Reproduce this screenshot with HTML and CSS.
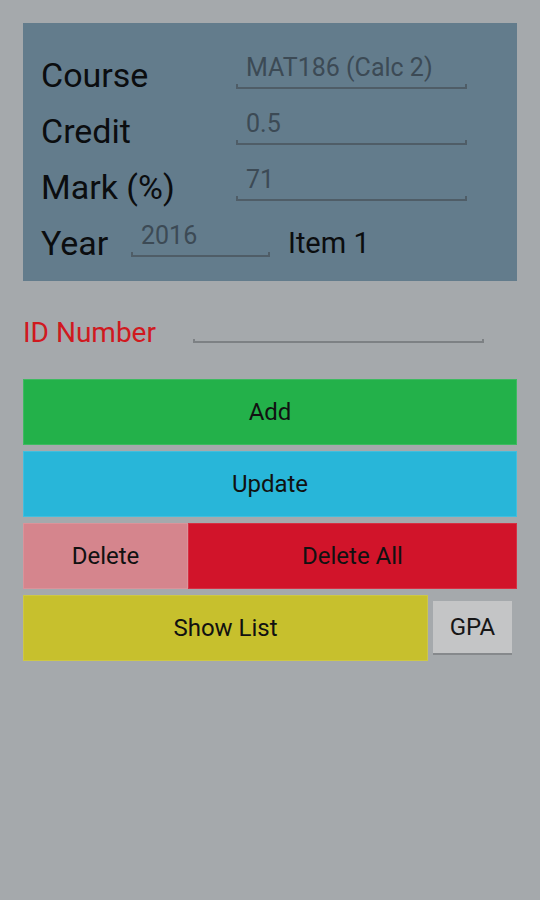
FILE: index.html
```html
<!DOCTYPE html>
<html lang="en">
<head>
    <meta charset="UTF-8">
    <title>GPA Calculator</title>
    <link rel="stylesheet" href="styles.css">
</head>
<body>
    <div class="screen">
        <div class="panel">
            <div class="row">
                <span class="label label-wide">Course</span>
                <div class="field field-wide">MAT186 (Calc 2)</div>
            </div>
            <div class="row">
                <span class="label label-wide">Credit</span>
                <div class="field field-wide">0.5</div>
            </div>
            <div class="row">
                <span class="label label-wide">Mark (%)</span>
                <div class="field field-wide">71</div>
            </div>
            <div class="row">
                <span class="label label-short">Year</span>
                <div class="field field-short">2016</div>
                <span class="item">Item 1</span>
            </div>
        </div>

        <div class="id-row">
            <span class="id-label">ID Number</span>
            <div class="field field-id"></div>
        </div>

        <div class="buttons">
            <button class="btn btn-add">Add</button>
            <button class="btn btn-update">Update</button>
            <div class="btn-row">
                <button class="btn btn-delete">Delete</button>
                <button class="btn btn-delete-all">Delete All</button>
            </div>
            <div class="btn-row">
                <button class="btn btn-show">Show List</button>
                <button class="btn-gpa">GPA</button>
            </div>
        </div>
    </div>
</body>
</html>
```

FILE: styles.css
```css
body {
    margin: 0;
    font-family: Roboto, "Liberation Sans", sans-serif;
    background-color: #a5a9ac;
    height: 100vh;
}
.screen {
    padding: 23px 23px 0 23px;
}
.panel {
    background: #637c8c;
    padding: 24px 0 10px 18px;
}
.row {
    display: flex;
    height: 56px;
}
.label {
    font-size: 34px;
    line-height: 56px;
    color: #0b0d0f;
}
.label-wide {
    width: 195px;
}
.label-short {
    width: 90px;
}
.field {
    position: relative;
    box-sizing: border-box;
    height: 42px;
    padding: 6px 0 0 10px;
    font-size: 25px;
    line-height: 30px;
    color: #3c4a55;
    border-bottom: 2px solid #4f5d67;
}
.field::before,
.field::after {
    content: "";
    position: absolute;
    bottom: -2px;
    width: 2px;
    height: 5px;
    background: #4f5d67;
}
.field::before {
    left: 0;
}
.field::after {
    right: 0;
}
.field-wide {
    width: 231px;
}
.field-short {
    width: 139px;
}
.item {
    margin-left: 18px;
    font-size: 29px;
    line-height: 56px;
    color: #0b0d0f;
}
.id-row {
    display: flex;
    height: 98px;
    padding-top: 27px;
    box-sizing: border-box;
}
.id-label {
    width: 170px;
    font-size: 28px;
    line-height: 50px;
    color: #d0191f;
}
.field-id {
    width: 291px;
    height: 35px;
    border-bottom-color: #7d8184;
}
.field-id::before,
.field-id::after {
    background: #7d8184;
    height: 4px;
}
.buttons {
    display: flex;
    flex-direction: column;
    gap: 6px;
}
.btn-row {
    display: flex;
    align-items: center;
}
.btn {
    height: 66px;
    border: 1px solid rgba(255, 255, 255, 0.12);
    font-family: Roboto, "Liberation Sans", sans-serif;
    font-size: 24px;
    color: #111;
    padding: 0;
    width: 100%;
}
.btn-add {
    background-color: #23b14a;
}
.btn-update {
    background-color: #28b6d9;
}
.btn-delete {
    width: 165px;
    background-color: #d5858d;
}
.btn-delete-all {
    flex: 1;
    background-color: #d1142a;
}
.btn-show {
    width: 405px;
    background-color: #c7c02d;
}
.btn-gpa {
    width: 79px;
    height: 54px;
    margin-left: 5px;
    border: none;
    border-bottom: 2px solid #86898c;
    background-color: #c4c5c6;
    font-family: Roboto, "Liberation Sans", sans-serif;
    font-size: 24px;
    color: #161616;
    padding: 0;
}
```
